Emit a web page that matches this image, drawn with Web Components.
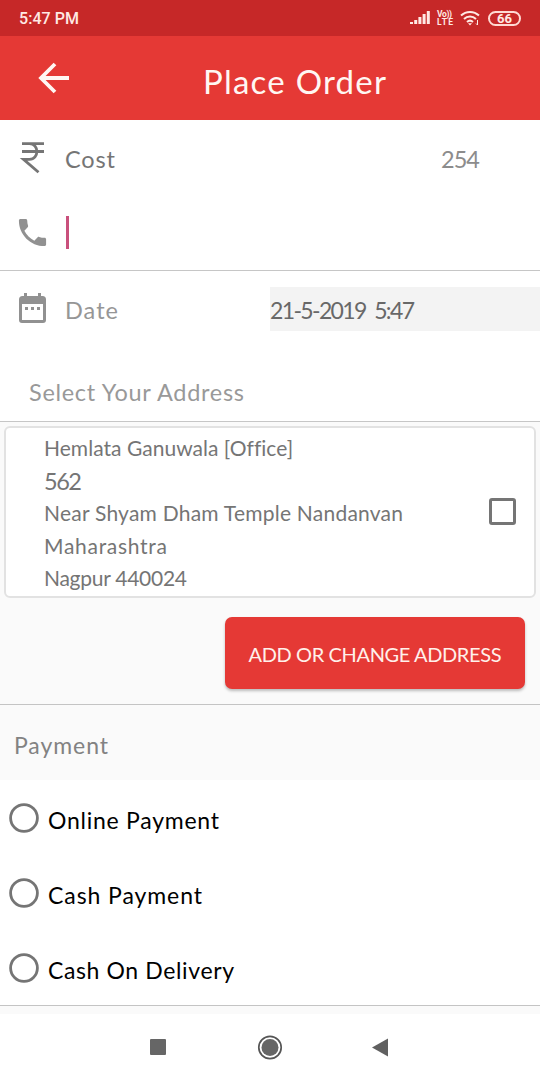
<!DOCTYPE html>
<html lang="en">
<head>
<meta charset="utf-8">
<title>Place Order</title>
<style>
    body {
        margin: 0;
        background: #fff;
        font-family: Lato, "Open Sans", sans-serif;
        color: #757575;
    }
</style>
</head>
<body>
<order-screen></order-screen>

<script>
// Single line of text spaced out to a given width
class FitText extends HTMLElement {
    connectedCallback() {
        this.attachShadow({ mode: 'open' });
        this.shadowRoot.innerHTML = `
            <style>
                :host { display: flex; width: max-content; }
                span { display: block; white-space: pre; }
            </style>
            <span><slot></slot></span>
        `;
        const span = this.shadowRoot.querySelector('span');
        const width = Number(this.getAttribute('width'));
        const gap = (width - span.getBoundingClientRect().width) / (this.textContent.length - 1);
        span.style.letterSpacing = `${gap}px`;
        span.style.marginRight = `${-gap}px`;
    }
}

class StatusBar extends HTMLElement {
    connectedCallback() {
        this.attachShadow({ mode: 'open' });
        this.shadowRoot.innerHTML = `
            <style>
                :host {
                    display: flex;
                    align-items: center;
                    justify-content: space-between;
                    box-sizing: border-box;
                    height: 36px;
                    padding: 0 19px 0 19px;
                    background: #c62828;
                    color: #ffe9e4;
                    font: 500 16px Roboto, sans-serif;
                }
                .icons { display: flex; align-items: center; gap: 7px; }
                .lte {
                    width: 16px;
                    font: 700 8.5px/8px Roboto, sans-serif;
                }
                .battery {
                    box-sizing: border-box;
                    width: 33px;
                    height: 15px;
                    border: 2px solid #ffd9d3;
                    border-radius: 8px;
                    font: 700 13px/12px Roboto, sans-serif;
                    text-align: center;
                }
                svg { display: block; }
            </style>
            <fit-text width="60">5:47 PM</fit-text>
            <div class="icons">
                <svg width="20" height="14" viewBox="0 0 20 14" fill="#ffe9e4">
                    <rect x="0" y="11" width="3" height="2"/>
                    <rect x="4.2" y="9" width="3" height="4"/>
                    <rect x="8.4" y="6" width="3" height="7"/>
                    <rect x="12.6" y="3" width="3" height="10"/>
                    <rect x="16.8" y="0" width="3" height="13"/>
                </svg>
                <div class="lte"><fit-text width="15">Vo))</fit-text><fit-text width="16">LTE</fit-text></div>
                <svg width="21" height="16" viewBox="0 0 21 16" fill="none" stroke="#ffe9e4" stroke-width="2">
                    <path d="M1 5.500a13 13 0 0 1 18 0M4 9a8.700 8.700 0 0 1 12 0M7 12a4.500 4.500 0 0 1 6 0"/>
                    <path d="M8 13.2L10 15.5L12 13.2z" fill="#ffe9e4" stroke="none"/>
                    <path d="M17.5 10v5M16 13.5l1.5 1.5" stroke-width="1"/>
                </svg>
                <div class="battery">66</div>
            </div>
        `;
    }
}

class AppHeader extends HTMLElement {
    connectedCallback() {
        this.attachShadow({ mode: 'open' });
        this.shadowRoot.innerHTML = `
            <style>
                :host {
                    display: flex;
                    align-items: center;
                    height: 84px;
                    padding-left: 38px;
                    background: #e53935;
                    color: #fff7f3;
                    font-size: 33px;
                    line-height: 40px;
                }
                .title { margin: 6px 0 0 133px; }
            </style>
            <svg width="32" height="32" viewBox="0 0 32 32" fill="none" stroke="#fff7f3" stroke-width="3.8">
                <path d="M31 16H3.500M17 2L3 16L17 30"/>
            </svg>
            <div class="title"><slot></slot></div>
        `;
    }
}

// Icon column followed by the row content
class FormRow extends HTMLElement {
    connectedCallback() {
        this.attachShadow({ mode: 'open' });
        this.shadowRoot.innerHTML = `
            <style>
                :host {
                    display: flex;
                    align-items: center;
                    box-sizing: border-box;
                    font-size: 23.5px;
                    line-height: 30px;
                }
                .icon { flex: none; box-sizing: border-box; width: 47px; padding-left: 18px; }
                .body { flex: 1; display: flex; align-items: center; }
            </style>
            <div class="icon"><slot name="icon"></slot></div>
            <div class="body"><slot></slot></div>
        `;
    }
}

class AddressCard extends HTMLElement {
    connectedCallback() {
        this.attachShadow({ mode: 'open' });
        this.shadowRoot.innerHTML = `
            <style>
                :host {
                    display: flex;
                    align-items: center;
                    justify-content: space-between;
                    box-sizing: border-box;
                    height: 172px;
                    border: 2px solid #e2e2e2;
                    border-radius: 6px;
                    background: #fff;
                    padding: 0 18px 0 38px;
                    font-size: 21px;
                    line-height: 32.5px;
                }
                .lines { padding-top: 3px; }
                .box {
                    box-sizing: border-box;
                    width: 27px;
                    height: 27px;
                    margin-bottom: 2px;
                    border: 3px solid #757575;
                    border-radius: 3px;
                }
            </style>
            <div class="lines"><slot></slot></div>
            <div class="box"></div>
        `;
    }
}

class AddressButton extends HTMLElement {
    connectedCallback() {
        this.attachShadow({ mode: 'open' });
        this.shadowRoot.innerHTML = `
            <style>
                :host { display: block; }
                button {
                    display: flex;
                    align-items: center;
                    justify-content: center;
                    width: 300px;
                    height: 72px;
                    padding: 2px 0 0;
                    border: 0;
                    border-radius: 7px;
                    background: #e53935;
                    color: #fff0ea;
                    font: 20px/24px Lato, sans-serif;
                    box-shadow: 0 2px 3px rgba(0, 0, 0, 0.25);
                }
            </style>
            <button><slot></slot></button>
        `;
    }
}

class PaymentOption extends HTMLElement {
    connectedCallback() {
        this.attachShadow({ mode: 'open' });
        this.shadowRoot.innerHTML = `
            <style>
                :host {
                    display: flex;
                    align-items: center;
                    height: 75px;
                    padding-left: 9px;
                    background: #fff;
                    color: #000;
                    font-size: 23px;
                    line-height: 30px;
                }
                .label { padding: 4px 0 0 9px; }
            </style>
            <svg width="30" height="30" viewBox="0 0 30 30" fill="none" stroke="#757575" stroke-width="2.8">
                <circle cx="15" cy="15" r="13.4"/>
            </svg>
            <div class="label"><slot></slot></div>
        `;
    }
}

class NavBar extends HTMLElement {
    connectedCallback() {
        this.attachShadow({ mode: 'open' });
        this.shadowRoot.innerHTML = `
            <style>
                :host {
                    display: flex;
                    align-items: center;
                    justify-content: center;
                    gap: 86px;
                    height: 66px;
                    background: #fff;
                }
            </style>
            <svg width="26" height="26" viewBox="0 0 26 26"><rect x="5" y="5" width="16" height="16" rx="1" fill="#666"/></svg>
            <svg width="26" height="26" viewBox="0 0 26 26">
                <circle cx="13" cy="13.5" r="11.2" fill="none" stroke="#555" stroke-width="1.7"/>
                <circle cx="13" cy="13.5" r="8.5" fill="#666"/>
            </svg>
            <svg width="26" height="26" viewBox="0 0 26 26"><path d="M3 13.500L19 4.500v18z" fill="#606060"/></svg>
        `;
    }
}

class OrderScreen extends HTMLElement {
    connectedCallback() {
        this.attachShadow({ mode: 'open' });
        this.shadowRoot.innerHTML = `
            <style>
                :host {
                    display: flex;
                    flex-direction: column;
                    width: 540px;
                    height: 1080px;
                    overflow: hidden;
                    background: #fafafa;
                }
                .form { height: 302px; background: #fff; }
                svg { display: block; }
                .cost { height: 78px; }
                .cost svg { margin-bottom: 5px; }
                .cost .value { margin: 0 60px 0 auto; color: #8c8c8c; }
                .phone { height: 69px; margin-bottom: 3px; }
                .caret { width: 3px; height: 33px; margin-left: 19px; background: #c9507c; }
                .date { height: 76px; border-top: 1px solid #c6c6c6; padding-top: 1px; }
                .date svg { margin-bottom: 2px; }
                .label { margin-left: 18px; }
                .light { color: #969696; padding-top: 2px; }
                .stamp {
                    box-sizing: border-box;
                    width: 270px;
                    height: 44px;
                    padding-top: 8px;
                    margin-left: auto;
                    background: #f3f3f3;
                    color: #686868;
                    font-size: 23px;
                }
                .select {
                    display: flex;
                    align-items: center;
                    box-sizing: border-box;
                    height: 76px;
                    padding: 17px 0 0 29px;
                    border-bottom: 1px solid #c6c6c6;
                    font-size: 23.5px;
                    color: #999;
                }
                .address {
                    display: flex;
                    flex-direction: column;
                    box-sizing: border-box;
                    height: 283px;
                    padding: 4px 4px 0;
                    border-bottom: 1px solid #c4c4c4;
                }
                .address address-button { margin: 19px 11px 0 auto; }
                .big { font-size: 23.5px; }
                .payment {
                    height: 75px;
                    box-sizing: border-box;
                    padding: 25px 0 0 14px;
                    font-size: 23px;
                    line-height: 30px;
                    color: #828282;
                }
                .options { border-bottom: 1px solid #c4c4c4; margin-bottom: 8px; }
            </style>
            <status-bar></status-bar>
            <app-header><fit-text width="183">Place Order</fit-text></app-header>
            <div class="form">
                <form-row class="cost">
                    <svg slot="icon" width="29" height="34" viewBox="0 0 29 34" fill="none" stroke="#757575" stroke-width="2.8">
                        <path d="M4 3.700h22M4 11.500h22M5 3.700h6.500c9.800 0 9.800 15.600 0 15.600H5.500L20.500 32.300"/>
                    </svg>
                    <fit-text class="label" width="50">Cost</fit-text>
                    <fit-text class="value" width="39">254</fit-text>
                </form-row>
                <form-row class="phone">
                    <svg slot="icon" width="29" height="29" viewBox="2.4 2.4 19.2 19.2" fill="#919191">
                        <path d="M6.62 10.79c1.44 2.83 3.76 5.14 6.59 6.59l2.2-2.2c.27-.27.67-.36 1.02-.24 1.12.37 2.33.57 3.57.57.55 0 1 .45 1 1V20c0 .55-.45 1-1 1-9.39 0-17-7.61-17-17 0-.55.45-1 1-1h3.5c.55 0 1 .45 1 1 0 1.25.2 2.45.57 3.57.11.35.03.74-.25 1.02l-2.2 2.2z"/>
                    </svg>
                    <div class="caret"></div>
                </form-row>
                <form-row class="date">
                    <svg slot="icon" width="29" height="32" viewBox="0 0 29 32" fill="#919191">
                        <path fill-rule="evenodd" d="M6 1h3v3h11V1h3v3h1.500a3.500 3.500 0 0 1 3.500 3.500V28a3 3 0 0 1-3 3H4a3 3 0 0 1-3-3V7.500A3.500 3.500 0 0 1 4.500 4H6zM4 12v16h21V12z"/>
                        <path d="M7 15h3v3H7zM13 15h3v3h-3zM19 15h3v3h-3z"/>
                    </svg>
                    <fit-text class="label light" width="53">Date</fit-text>
                    <div class="stamp"><fit-text width="145">21-5-2019  5:47</fit-text></div>
                </form-row>
                <div class="select"><fit-text width="215">Select Your Address</fit-text></div>
            </div>
            <div class="address">
                <address-card>
                    <fit-text width="248">Hemlata Ganuwala [Office]</fit-text>
                    <fit-text class="big" width="38">562</fit-text>
                    <fit-text width="359">Near Shyam Dham Temple Nandanvan</fit-text>
                    <fit-text width="123">Maharashtra</fit-text>
                    <fit-text width="143">Nagpur 440024</fit-text>
                </address-card>
                <address-button><fit-text width="253">ADD OR CHANGE ADDRESS</fit-text></address-button>
            </div>
            <div class="payment"><fit-text width="94">Payment</fit-text></div>
            <div class="options">
                <payment-option><fit-text width="171">Online Payment</fit-text></payment-option>
                <payment-option><fit-text width="154">Cash Payment</fit-text></payment-option>
                <payment-option><fit-text width="186">Cash On Delivery</fit-text></payment-option>
            </div>
            <nav-bar></nav-bar>
        `;
    }
}

customElements.define('fit-text', FitText);
customElements.define('status-bar', StatusBar);
customElements.define('app-header', AppHeader);
customElements.define('form-row', FormRow);
customElements.define('address-card', AddressCard);
customElements.define('address-button', AddressButton);
customElements.define('payment-option', PaymentOption);
customElements.define('nav-bar', NavBar);
customElements.define('order-screen', OrderScreen);
</script>
</body>
</html>
